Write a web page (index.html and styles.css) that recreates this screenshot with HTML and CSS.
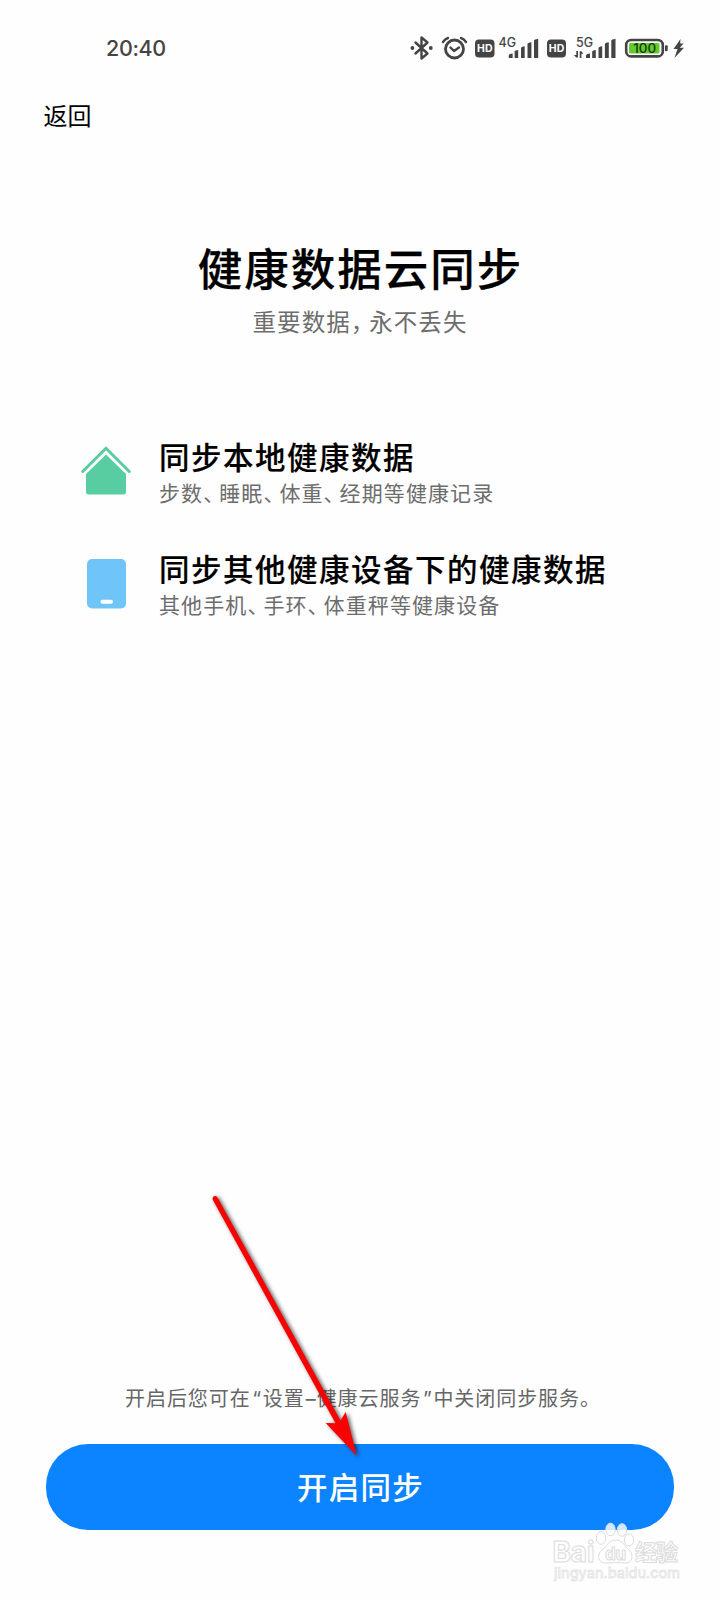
FILE: index.html
```html
<!DOCTYPE html>
<html lang="zh-CN">
<head>
<meta charset="utf-8">
<title>健康数据云同步</title>
<link rel="stylesheet" href="styles.css">
</head>
<body>
<div class="screen">
  <header class="status">
    <span class="time">20:40</span>
    <svg class="status-icons" viewBox="400 30 290 36" width="290" height="36">
      <g fill="none" stroke="#444" stroke-width="2.4" stroke-linejoin="round" stroke-linecap="round">
        <path d="M415.500 42.500 L427.500 53.500 L421.500 58.500 V37.500 L427.500 42.500 L415.500 53.500"/>
        <circle cx="454.500" cy="49" r="9" stroke-width="2.800"/>
        <path d="M450.500 47.500 L454 51 L459 47.500"/>
        <path d="M443 42 Q445 39 448 38 M466 42 Q464 39 461 38"/>
      </g>
      <circle cx="412.400" cy="48" r="1.900" fill="#444"/><circle cx="430.800" cy="48" r="1.900" fill="#444"/>
      <g fill="#444">
        <rect x="475" y="39.500" width="19.500" height="18" rx="4"/>
        <rect x="547" y="39.500" width="19" height="18" rx="4"/>
        <path d="M508.700 58v-2.300q0-2 4-2.200V58zM514.600 58V51.500q0-1 3.600-1.500V58zM521 58V48q0-1 3.700-1.700V58zM527.500 58V44q0-1 3.900-1.700V58zM534 58V40.500q0-1 4.200-1.800V58z"/>
        <path d="M586 58v-2.300q0-2 4-2.200V58zM592.200 58V51.500q0-1 3.600-1.500V58zM598.500 58V48q0-1 3.700-1.700V58zM604.900 58V44q0-1 3.900-1.700V58zM611.300 58V40.500q0-1 4.200-1.800V58z"/>
        <path d="M576.300 51h1.700v6.500h-1.700l-2.500-2.500h2.500zM579.700 58v-6.800h1.700l2 2.600h-2V58z"/>
        <rect x="665" y="45.300" width="2.700" height="6" rx="1"/>
        <path d="M680.500 39 L673.500 49 H677.500 L674.500 58 L684 47.800 H679.800 L683.500 43.500 H680.200z"/>
      </g>
      <rect x="626.200" y="40" width="36.600" height="16.400" rx="5" fill="none" stroke="#444" stroke-width="2.600"/>
      <rect x="629" y="43" width="30.500" height="10.500" rx="1.500" fill="#63cb31"/>
      <text class="hd" x="484.800" y="52.300">HD</text>
      <text class="hd" x="556.500" y="52.300">HD</text>
      <text class="net" x="498.500" y="46.600">4G</text>
      <text class="net" x="576" y="46.600">5G</text>
      <text class="level" x="644.700" y="53.200">100</text>
    </svg>
  </header>
  <nav class="back">返回</nav>
  <main class="content">
    <h1 class="title">健康数据云同步</h1>
    <p class="subtitle">重要数据<span class="comma">，</span>永不丢失</p>
    <ul class="features">
      <li class="feature">
        <svg class="feature-icon" viewBox="0 0 52 52" width="52" height="52">
          <path d="M2.700 26.500 L26 3.200 L49.300 26.500" fill="none" stroke="#58cda2" stroke-width="3" stroke-linecap="round" stroke-linejoin="round"/>
          <path d="M26 9.500 L46 29 V47 Q46 49.500 43.500 49.500 H8.500 Q6 49.500 6 47 V29 Z" fill="#58cda2"/>
        </svg>
        <div class="feature-text">
          <h2 class="feature-title">同步本地健康数据</h2>
          <p class="feature-desc">步数<span class="pause">、</span>睡眠<span class="pause">、</span>体重<span class="pause">、</span>经期等健康记录</p>
        </div>
      </li>
      <li class="feature">
        <svg class="feature-icon" viewBox="0 0 52 52" width="52" height="52">
          <rect x="7" y="2" width="39" height="49.500" rx="5" fill="#70c5f8"/>
          <rect x="20.500" y="42.700" width="12.500" height="4" rx="2" fill="#fff"/>
        </svg>
        <div class="feature-text">
          <h2 class="feature-title">同步其他健康设备下的健康数据</h2>
          <p class="feature-desc">其他手机<span class="pause">、</span>手环<span class="pause">、</span>体重秤等健康设备</p>
        </div>
      </li>
    </ul>
  </main>
  <footer class="actions">
    <p class="note">开启后您可在<span class="quote">“</span>设置<span class="quote">–</span>健康云服务<span class="quote">”</span>中关闭同步服务。</p>
    <button class="primary">开启同步</button>
  </footer>
  <svg class="arrow" viewBox="0 0 180 290" width="180" height="290">
    <path d="M12.600 19.500 Q12.200 15.500 16 16 L17.500 17.500 L140.500 240.500 L145.700 232 L156.800 276 L125.700 243 L135.500 243.300 Z" fill="#fb0000"/>
  </svg>
  <svg class="watermark" viewBox="545 1515 150 75" width="150" height="75">
    <g class="mark">
      <ellipse cx="601" cy="1538" rx="4.800" ry="6.300"/>
      <ellipse cx="610.500" cy="1529.500" rx="4.700" ry="6.300"/>
      <ellipse cx="622" cy="1530" rx="4.700" ry="6.300"/>
      <ellipse cx="629" cy="1540" rx="4.700" ry="6"/>
      <path d="M616 1540 C608 1540 607 1547 602 1550 C596 1555 598 1564 607 1563 Q616 1562 624 1563 C633 1564 634 1555 629 1550 C624 1547 624 1540 616 1540Z"/>
      <text class="wm-latin" x="552.500" y="1562" textLength="42">Bai</text>
      <text class="wm-du" x="605" y="1559.500" textLength="21">du</text>
      <text class="wm-cjk" x="635" y="1560" textLength="43">经验</text>
      <text class="wm-url" x="554" y="1578" textLength="126">jingyan.baidu.com</text>
    </g>
  </svg>
</div>
</body>
</html>
```
FILE: styles.css
```css
* { box-sizing: border-box; margin: 0; padding: 0; }
body { background: #fff; }
.screen {
  position: relative;
  display: flex;
  flex-direction: column;
  width: 720px;
  height: 1600px;
  overflow: hidden;
  background: #fefefe;
  color: #000;
  font-family: "Noto Sans CJK SC", sans-serif;
}
.status {
  display: flex;
  justify-content: space-between;
  align-items: center;
  height: 96px;
  padding: 0 30px 0 106px;
}
.time { font: 500 21.5px/30px Inter, sans-serif; letter-spacing: -.35px; color: #444; }
.status-icons { display: block; }
.hd { font: 700 10.5px Inter, sans-serif; fill: #fff; text-anchor: middle; }
.net { font: 500 12.5px Inter, sans-serif; fill: #444; }
.level { font: 500 13.5px Inter, sans-serif; fill: #153d08; text-anchor: middle; }
.back { height: 38px; padding-left: 43.5px; font-size: 24px; line-height: 38px; }
.content { flex: 1; padding-top: 101px; }
.title { padding-left: 1px; font-size: 44.5px; line-height: 64px; font-weight: 500; letter-spacing: 2px; text-align: center; -webkit-text-stroke: .25px #000; }
.subtitle { margin-top: 4px; font-size: 23.5px; line-height: 36px; letter-spacing: 1.05px; text-align: center; color: #6d6d6d; }
.comma { letter-spacing: -5px; }
.features { display: flex; flex-direction: column; gap: 34px; margin-top: 93px; padding-left: 80px; list-style: none; }
.feature { display: flex; align-items: center; gap: 27px; height: 78px; }
.feature-icon { flex: none; }
.feature-title { font-size: 30.5px; line-height: 42px; font-weight: 500; letter-spacing: 1.5px; white-space: nowrap; -webkit-text-stroke: .15px #000; }
.feature-desc { font-size: 21px; line-height: 30px; letter-spacing: 1.1px; color: #6d6d6d; white-space: nowrap; }
.pause { letter-spacing: -5px; }
.actions { display: flex; flex-direction: column; gap: 31px; height: 217px; padding: 0 46px; }
.note { height: 30px; padding-left: 6px; font-size: 20px; line-height: 30px; letter-spacing: .95px; text-align: center; color: #666; white-space: nowrap; }
.quote { display: inline-block; width: 12px; font-family: Inter, sans-serif; text-align: center; letter-spacing: 0; }
.primary {
  height: 86px;
  border: 0;
  border-radius: 42px;
  background: #0d84ff;
  color: #fff;
  font: 500 30.5px/84px "Noto Sans CJK SC", sans-serif;
  letter-spacing: 1.3px;
  padding: 0 0 2px 1px;
}
.arrow { position: absolute; left: 200px; top: 1180px; filter: drop-shadow(2px 1px 2px rgba(0, 0, 0, .65)); }
.watermark { position: absolute; left: 545px; top: 1515px; }
.mark { fill: rgba(255, 255, 255, .82); stroke: #dcdcdc; stroke-width: 1; }
.wm-latin { font: 700 28px Inter, sans-serif; }
.wm-du { font: 700 17px Inter, sans-serif; }
.wm-cjk { font: 700 22px "Noto Sans CJK SC", sans-serif; }
.wm-url { font: 400 14.5px Inter, sans-serif; stroke: #e4e4e4; stroke-width: .8; }
```
